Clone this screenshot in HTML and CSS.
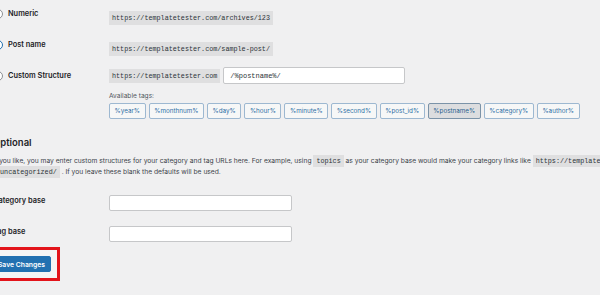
FILE: index.html
```html
<!DOCTYPE html>
<html lang="en">
<head>
    <meta charset="UTF-8">
    <title>Permalink Settings</title>
    <link rel="stylesheet" href="styles.css">
</head>
<body>
    <div class="wrap">
        <div class="option">
            <label class="label"><span class="radio"></span>Numeric</label>
            <div class="field"><code>https://templatetester.com/archives/123</code></div>
        </div>
        <div class="option">
            <label class="label"><span class="radio checked"></span>Post name</label>
            <div class="field"><code>https://templatetester.com/sample-post/</code></div>
        </div>
        <div class="option custom">
            <label class="label"><span class="radio"></span>Custom Structure</label>
            <div class="field">
                <div class="structure">
                    <code>https://templatetester.com</code>
                    <input class="text mono" type="text" value="/%postname%/">
                </div>
                <div class="hint">Available tags:</div>
                <div class="tags">
                    <button class="tag">%year%</button>
                    <button class="tag">%monthnum%</button>
                    <button class="tag">%day%</button>
                    <button class="tag">%hour%</button>
                    <button class="tag">%minute%</button>
                    <button class="tag">%second%</button>
                    <button class="tag">%post_id%</button>
                    <button class="tag active">%postname%</button>
                    <button class="tag">%category%</button>
                    <button class="tag">%author%</button>
                </div>
            </div>
        </div>

        <h2 class="title">Optional</h2>
        <p class="desc">If you like, you may enter custom structures for your category and tag URLs here. For example, using <code>topics</code> as your category base would make your category links like <code>https://templatetester.com/topics</code><br><code>/uncategorized/</code> . If you leave these blank the defaults will be used.</p>

        <div class="option base">
            <label class="label">Category base</label>
            <div class="field"><input class="text" type="text"></div>
        </div>
        <div class="option base">
            <label class="label">Tag base</label>
            <div class="field"><input class="text" type="text"></div>
        </div>

        <div class="highlight">
            <button class="primary">Save Changes</button>
        </div>
    </div>
</body>
</html>
```
FILE: styles.css
```css
body {
    margin: 0;
    background: #f0f0f1;
    color: #1d2327;
    font-family: 'Inter', 'Liberation Sans', sans-serif;
    overflow: hidden;
    height: 295px;
}
.wrap {
    margin-left: -7px;
    margin-top: -2px;
}
.option {
    display: grid;
    grid-template-columns: 116px 1fr;
    align-items: center;
    height: 31px;
}
.label {
    display: flex;
    align-items: center;
    gap: 5px;
    font-size: 7.4px;
    font-weight: 600;
}
.radio {
    width: 8px;
    height: 8px;
    border: 1px solid #8c8f94;
    border-radius: 50%;
    background: #fff;
    display: flex;
    align-items: center;
    justify-content: center;
}
.radio.checked {
    border-color: #2271b1;
}
.radio.checked:before {
    content: "";
    width: 4px;
    height: 4px;
    border-radius: 50%;
    background: #2271b1;
}
code {
    font-family: 'Liberation Mono', monospace;
    font-size: 6.75px;
    background: #dfdfe0;
    padding: 3px 3px;
    color: #2c3338;
}
.custom {
    align-items: start;
    height: auto;
}
.custom .label {
    height: 31px;
}
.structure {
    height: 31px;
    display: flex;
    align-items: center;
    gap: 3px;
}
.text {
    box-sizing: border-box;
    width: 183px;
    height: 16px;
    border: 1px solid #c6c7c9;
    border-radius: 2px;
    background: #fff;
    padding: 0 6px;
    font-family: 'Inter', sans-serif;
    font-size: 7px;
    color: #2c3338;
    outline: none;
}
.text.mono {
    font-family: 'Liberation Mono', monospace;
    height: 17px;
    width: 182px;
}
.hint {
    font-size: 6.6px;
    line-height: 10px;
    color: #50575e;
}
.tags {
    display: flex;
    gap: 3px;
    margin-top: 2px;
}
.tag {
    height: 16px;
    padding: 0 4.6px;
    border: 1px solid #9db8d1;
    border-radius: 2px;
    background: #f6f7f7;
    color: #2f6fa6;
    font-family: 'Inter', sans-serif;
    font-size: 6.3px;
}
.tag.active {
    background: #dcdddf;
    border-color: #7b93a8;
    color: #2a5f8e;
}
.title {
    margin: 18px 0 0;
    font-size: 9.5px;
    line-height: 12px;
    font-weight: 600;
}
.desc {
    margin: 7px 0 7px;
    font-size: 6.7px;
    line-height: 11px;
    color: #3c434a;
    white-space: nowrap;
}
.desc code {
    padding: 2px 3px;
}
.base {
    height: 31px;
}
.highlight {
    display: inline-block;
    margin: 0 0 0 -9px;
    border: 3px solid #e3141b;
    padding: 6px;
    background: #f5f5f5;
}
.primary {
    display: block;
    height: 16px;
    width: 58px;
    border: 1px solid #2271b1;
    border-radius: 2px;
    background: #2271b1;
    color: #fff;
    font-family: 'Inter', sans-serif;
    font-size: 6.8px;
    font-weight: 600;
    padding: 0 5px 0 0;
    text-align: right;
}
```
